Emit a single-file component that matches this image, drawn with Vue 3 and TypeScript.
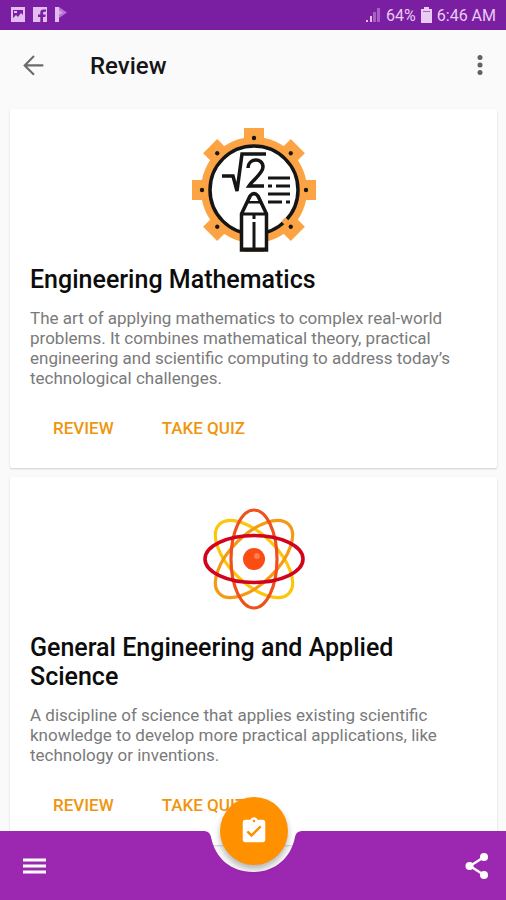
<script setup lang="ts">
interface Course {
  id: string
  icon: 'gear' | 'atom'
  title: string
  summary: string
}

const courses: Course[] = [
  {
    id: 'math',
    icon: 'gear',
    title: 'Engineering Mathematics',
    summary:
      'The art of applying mathematics to complex real-world problems. It combines mathematical theory, practical engineering and scientific computing to address today’s technological challenges.',
  },
  {
    id: 'science',
    icon: 'atom',
    title: 'General Engineering and Applied Science',
    summary:
      'A discipline of science that applies existing scientific knowledge to develop more practical applications, like technology or inventions.',
  },
]

const teeth: number[] = [0, 45, 90, 135, 180, 225, 270, 315]
</script>

<template>
  <div class="app">
    <div class="status">
      <div class="status-group">
        <svg width="16" height="16" viewBox="0 0 16 16" aria-hidden="true">
          <path fill-rule="evenodd" d="M1 0h14v15H1zM3 3v8l3-3 2 2 3-4 2 2V3z" fill="#e3bdf0" />
          <path d="M4 4h3v2H4z" fill="#e3bdf0" />
        </svg>
        <svg width="16" height="16" viewBox="0 0 16 16" aria-hidden="true">
          <path d="M1 0h14v15h-4V10h2.300l.4-2.500H11V6q0-1.200 1.300-1.200H14V2.500h-2.500Q8.300 2.500 8.300 5.500v2H6V10h2.300v5H1z" fill="#e3bdf0" />
        </svg>
        <svg width="16" height="16" viewBox="0 0 16 16" aria-hidden="true">
          <path d="M1 0h4v15H1z" fill="#e3bdf0" />
          <path d="M5 0l8 5.500L5 11z" fill="#b873d3" />
          <path d="M5 3l4 2.500L5 8z" fill="#d6a3e8" />
        </svg>
      </div>
      <div class="status-group right">
        <svg width="16" height="16" viewBox="0 0 16 16" aria-hidden="true">
          <path d="M1 13h2v2H1zM5 9h2v6H5z" fill="#e3bdf0" />
          <path d="M8 5h3v10H8zM12 1h3v14h-3z" fill="#a65fc5" />
        </svg>
        <span>64%</span>
        <svg width="11" height="16" viewBox="0 0 11 16" aria-hidden="true">
          <path d="M3 0h5v2h3v14H0V2h3z" fill="#e9cbf3" />
          <path d="M2 4h7v1H2z" fill="#a865c6" />
        </svg>
        <span>6:46 AM</span>
      </div>
    </div>

    <header class="toolbar">
      <button class="icon-button" type="button" aria-label="Back">
        <svg width="28" height="28" viewBox="0 0 24 24" aria-hidden="true">
          <path d="M20 11.500H5M12 3.500l-8 8 8 8" fill="none" stroke="#6b6b6b" stroke-width="1.800" />
        </svg>
      </button>
      <h1>Review</h1>
      <button class="icon-button" type="button" aria-label="More options">
        <svg width="28" height="28" viewBox="0 0 28 28" aria-hidden="true" fill="#616161">
          <circle cx="14" cy="5.500" r="2.500" />
          <circle cx="14" cy="13" r="2.500" />
          <circle cx="14" cy="20.500" r="2.500" />
        </svg>
      </button>
    </header>

    <main class="list">
      <article v-for="course in courses" :key="course.id" class="card">
        <svg v-if="course.icon === 'gear'" class="picture" viewBox="0 0 124 124" aria-hidden="true">
          <g fill="#fca344">
            <circle cx="62" cy="62" r="53" />
            <path v-for="angle in teeth" :key="angle" d="M52 0h20v16H52z" :transform="`rotate(${angle} 62 62)`" />
          </g>
          <circle cx="62" cy="62" r="44" fill="#fff" stroke="#151515" stroke-width="3.500" />
          <path d="M91 95l4-4" stroke="#fca344" stroke-width="5" />
          <g fill="#151515">
            <circle v-for="angle in teeth" :key="angle" cx="62" cy="10" r="2.200" :transform="`rotate(${angle} 62 62)`" />
          </g>
          <g fill="none" stroke="#151515" stroke-width="3.500">
            <path d="M30 48h11l4 15 5-37h24" />
            <path d="M56 40c0-10 15-11 15-1 0 6-10 13-14 19h15" />
            <path d="M76 50h22M76 58h4M84 58h14M76 66h22M76 74h14M94 74h4" stroke-width="3" />
            <path d="M49.500 86v36h25V86L66 68q-4-5-8 0z" fill="#fff" />
            <path d="M50 86h24M56 74h12M62 85v6M62 94v28M50 121h24" stroke-width="3" />
          </g>
          <path d="M56 74l3-6q3-3 6 0l3 6z" fill="#fff" stroke="#151515" stroke-width="2" />
        </svg>
        <svg v-else class="picture" viewBox="0 0 124 124" aria-hidden="true">
          <g fill="none" stroke-width="3.200">
            <ellipse cx="62" cy="63" rx="49" ry="24" transform="rotate(45 62 63)" stroke="#fbc60c" />
            <ellipse cx="62" cy="63" rx="49" ry="24" transform="rotate(-45 62 63)" stroke="#f59a14" />
            <ellipse cx="62" cy="63" rx="23" ry="49" stroke="#f0501c" />
            <ellipse cx="62" cy="63" rx="49" ry="23.500" stroke="#d3031b" stroke-width="3.600" />
          </g>
          <circle cx="62" cy="63" r="11" fill="#fb4c14" />
          <circle cx="65" cy="60" r="3" fill="#ff7d55" />
        </svg>
        <h2>{{ course.title }}</h2>
        <p>{{ course.summary }}</p>
        <div class="actions">
          <button type="button">REVIEW</button>
          <button type="button">TAKE QUIZ</button>
        </div>
      </article>
    </main>

    <nav class="bottom">
      <div class="side">
        <button class="icon-button" type="button" aria-label="Menu">
          <svg width="28" height="28" viewBox="0 0 28 28" aria-hidden="true">
            <path d="M2 8h23M2 14h23M2 20h23" stroke="#fff" stroke-width="3" />
          </svg>
        </button>
      </div>
      <div class="notch">
        <svg width="100" height="69" viewBox="0 0 100 69" aria-hidden="true">
          <path d="M0 0c5 0 7 2 8 6C12 27 28 41 50 41S88 27 92 6C93 2 95 0 100 0V69H0z" fill="#9c27b0" />
        </svg>
        <button class="fab" type="button" aria-label="Start quiz">
          <svg width="30" height="30" viewBox="0 0 24 24" aria-hidden="true">
            <path
              d="M19 3h-4.180C14.400 1.840 13.300 1 12 1s-2.400.84-2.820 2H5c-1.100 0-2 .9-2 2v14c0 1.100.9 2 2 2h14c1.100 0 2-.9 2-2V5c0-1.100-.9-2-2-2zm-7 0c.55 0 1 .45 1 1s-.45 1-1 1-1-.45-1-1 .45-1 1-1zm-2 14l-4-4 1.410-1.410L10 14.170l6.590-6.590L18 9l-8 8z"
              fill="#fff"
            />
          </svg>
        </button>
      </div>
      <div class="side end">
        <button class="icon-button" type="button" aria-label="Share">
          <svg width="28" height="28" viewBox="0 0 28 28" aria-hidden="true">
            <path d="M21 5L7 14l14 9" fill="none" stroke="#fff" stroke-width="2.400" />
            <g fill="#fff">
              <circle cx="21" cy="5" r="4" />
              <circle cx="6.500" cy="14" r="4" />
              <circle cx="21" cy="23" r="4" />
            </g>
          </svg>
        </button>
      </div>
    </nav>
  </div>
</template>

<style>
body {
  margin: 0;
  background: #fafafa;
}
</style>

<style scoped>
.app {
  position: relative;
  display: flex;
  flex-direction: column;
  height: 100vh;
  overflow: hidden;
  background: #fafafa;
  font-family: Roboto, "Liberation Sans", sans-serif;
}

button {
  padding: 0;
  border: 0;
  background: none;
  font: inherit;
  color: inherit;
  cursor: pointer;
}

svg {
  display: block;
}

.status {
  display: flex;
  justify-content: space-between;
  align-items: center;
  flex: none;
  height: 30px;
  padding: 0 10px;
  background: #7b1fa2;
  color: #e9cbf3;
  font-size: 16px;
}

.status-group {
  display: flex;
  align-items: center;
  gap: 6px;
}

.status-group.right {
  gap: 5px;
}

.toolbar {
  display: flex;
  align-items: center;
  flex: none;
  height: 71px;
  padding: 0 12px 0 20px;
}

h1 {
  flex: 1;
  margin: 0 0 0 42px;
  font-size: 24px;
  font-weight: 500;
  color: #151515;
}

.icon-button {
  display: block;
  flex: none;
}

.list {
  display: flex;
  flex: 1;
  flex-direction: column;
  gap: 9px;
  min-height: 0;
  padding: 8px 9px 80px 10px;
  overflow-y: auto;
  scrollbar-width: none;
}

.card {
  flex: none;
  padding: 19px 20px 20px;
  border-radius: 2px;
  background: #fff;
  box-shadow: 0 1px 2px rgba(0, 0, 0, 0.18);
}

.picture {
  width: 124px;
  height: 124px;
  margin: 0 auto 13px;
}

h2 {
  margin: 0 0 14px;
  font-size: 25px;
  font-weight: 500;
  line-height: 29px;
  color: #0c0c0c;
}

p {
  margin: 0;
  font-size: 17px;
  line-height: 20px;
  color: #7a7a7a;
}

.actions {
  display: flex;
  gap: 48px;
  margin-top: 20px;
  padding-left: 23px;
  color: #ee960f;
  font-size: 17px;
  font-weight: 500;
}

.actions button {
  height: 40px;
}

.bottom {
  position: absolute;
  right: 0;
  bottom: 0;
  left: 0;
  display: flex;
  height: 69px;
}

.side {
  display: flex;
  flex: 1;
  align-items: center;
  padding: 0 15px 0 21px;
  background: #9c27b0;
}

.side.end {
  justify-content: flex-end;
}

.notch {
  position: relative;
  flex: none;
}

.fab {
  position: absolute;
  top: -34px;
  left: 17px;
  display: grid;
  place-items: center;
  width: 68px;
  height: 68px;
  border-radius: 50%;
  background: #ff9100;
  box-shadow: 0 4px 6px rgba(0, 0, 0, 0.28);
}
</style>
